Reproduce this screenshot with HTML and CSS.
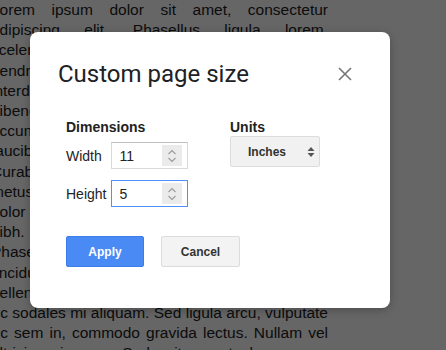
FILE: index.html
```html
<!DOCTYPE html>
<html>
<head>
<meta charset="utf-8">
<link rel="stylesheet" href="styles.css">
</head>
<body>
<div class="doc">
  <span class="ln">Lorem ipsum dolor sit amet, consectetur</span>
  <span class="ln">adipiscing elit. Phasellus ligula lorem,</span>
  <span class="ln">scelerisque at lectus id, ultrices tempor</span>
  <span class="ln">hendrerit diam. Nullam a lorem sed dui</span>
  <span class="ln">interdum varius. Donec vitae dictum</span>
  <span class="ln">bibendum nunc, at viverra felis auctor.</span>
  <span class="ln">accumsan quis, pretium in massa. Morbi</span>
  <span class="ln">faucibus eros at justo vehicula tempus.</span>
  <span class="ln">Curabitur sit amet nisl ac lacus feugiat</span>
  <span class="ln">metus vitae, ultrices tellus. Integer</span>
  <span class="ln">dolor sapien, posuere at odio quis, nibh</span>
  <span class="ln">nibh. Aliquam erat volutpat. Mauris et</span>
  <span class="ln">Phasellus eget metus ut augue porttitor</span>
  <span class="ln">tincidunt. Vivamus blandit risus eget</span>
  <span class="ln">pellentesque habitant morbi tristique et</span>
  <span class="ln shift">nec sodales mi aliquam. Sed ligula arcu, vulputate</span>
  <span class="ln shift">nec sem in, commodo gravida lectus. Nullam vel</span>
  <span class="ln">ultricies ipsum. Sed sit amet lacus non</span>
</div>
<div class="overlay"></div>
<div class="dialog">
  <div class="head">
    <div class="title">Custom page size</div>
    <svg class="close" width="14" height="14" viewBox="0 0 14 14"><path d="M1 1L13 13M13 1L1 13" stroke="#757575" stroke-width="1.6" fill="none"/></svg>
  </div>
  <div class="body">
    <div class="col dims">
      <div class="label">Dimensions</div>
      <div class="rows">
        <span class="rl">Width</span>
        <div class="num"><span class="val">11</span><span class="spin"><svg width="10" height="16" viewBox="0 0 10 16"><path d="M1.5 6L5 2.5L8.5 6M1.5 10L5 13.5L8.5 10" stroke="#9a9a9a" stroke-width="1.1" fill="none"/></svg></span></div>
        <span class="rl">Height</span>
        <div class="num focus"><span class="val">5</span><span class="spin"><svg width="10" height="16" viewBox="0 0 10 16"><path d="M1.5 6L5 2.5L8.5 6M1.5 10L5 13.5L8.5 10" stroke="#9a9a9a" stroke-width="1.1" fill="none"/></svg></span></div>
      </div>
    </div>
    <div class="col units">
      <div class="label">Units</div>
      <div class="select"><span class="sv">Inches</span><svg width="8" height="12" viewBox="0 0 8 12"><path d="M0.5 5L4 1L7.5 5Z M0.5 7L4 11L7.5 7Z" fill="#555"/></svg></div>
    </div>
  </div>
  <div class="actions">
    <button class="btn apply">Apply</button>
    <button class="btn cancel">Cancel</button>
  </div>
</div>
</body>
</html>
```
FILE: styles.css
```css
html, body {
  margin: 0;
  padding: 0;
  width: 446px;
  height: 350px;
  overflow: hidden;
  background: #fff;
}
.doc {
  margin-left: -9px;
  width: 337px;
  font-family: "Liberation Sans", Arial, sans-serif;
  font-size: 15.5px;
  line-height: 20.2px;
  color: #222;
}
.ln {
  display: block;
  white-space: nowrap;
  text-align: justify;
  text-align-last: justify;
}
.ln.shift {
  text-indent: -8px;
  word-spacing: -0.6px;
}
.overlay {
  position: absolute;
  left: 0;
  top: 0;
  width: 446px;
  height: 350px;
  background: rgba(0, 0, 0, 0.6);
}
.dialog {
  position: absolute;
  left: 30px;
  top: 32px;
  width: 360px;
  height: 276px;
  background: #fff;
  border-radius: 8px;
  box-shadow: 0 2px 8px rgba(0,0,0,0.25);
  box-sizing: border-box;
  display: flex;
  flex-direction: column;
}
.head {
  display: flex;
  align-items: center;
  justify-content: space-between;
  padding: 26px 38px 0 28px;
}
.title {
  font-family: Roboto, "Noto Sans", sans-serif;
  font-size: 24px;
  line-height: 32px;
  color: #202124;
}
.close {
  display: block;
}
.body {
  display: grid;
  grid-template-columns: 164px auto;
  padding: 29px 0 0 36px;
  font-family: "Liberation Sans", Arial, sans-serif;
}
.label {
  font-weight: bold;
  font-size: 14px;
  line-height: 16px;
  color: #222;
}
.rows {
  margin-top: 7px;
  display: grid;
  grid-template-columns: max-content 77px;
  justify-content: start;
  column-gap: 5px;
  row-gap: 11px;
  align-items: center;
}
.rl {
  font-size: 14px;
  color: #222;
}
.num {
  height: 27px;
  box-sizing: border-box;
  border: 1px solid #d9d9d9;
  border-top-color: #c0c0c0;
  display: flex;
  align-items: center;
  justify-content: space-between;
  padding: 0 5px 0 7px;
  font-size: 14px;
  color: #222;
}
.num.focus {
  border: 1px solid #4d90fe;
}
.spin {
  width: 20px;
  height: 21px;
  background: #ebebeb;
  display: flex;
  align-items: center;
  justify-content: center;
}
.spin svg { display: block; }
.select {
  margin-top: 1px;
  width: 90px;
  height: 31px;
  box-sizing: border-box;
  background: #f1f1f1;
  border: 1px solid #dcdcdc;
  border-radius: 2px;
  display: flex;
  align-items: center;
  justify-content: space-between;
  padding: 0 4px 0 17px;
  font-weight: bold;
  font-size: 12px;
  color: #333;
}
.select svg { display: block; }
.actions {
  display: flex;
  gap: 17px;
  padding: 29px 0 0 36px;
}
.btn {
  width: 78px;
  height: 31px;
  box-sizing: border-box;
  border-radius: 2px;
  font-family: "Liberation Sans", Arial, sans-serif;
  font-weight: bold;
  font-size: 12px;
  padding: 0;
}
.apply {
  background: #4a8af4;
  border: 1px solid #3b7de9;
  color: #fff;
}
.cancel {
  width: 79px;
  background: #f3f3f3;
  border: 1px solid #dcdcdc;
  color: #333;
}
```
